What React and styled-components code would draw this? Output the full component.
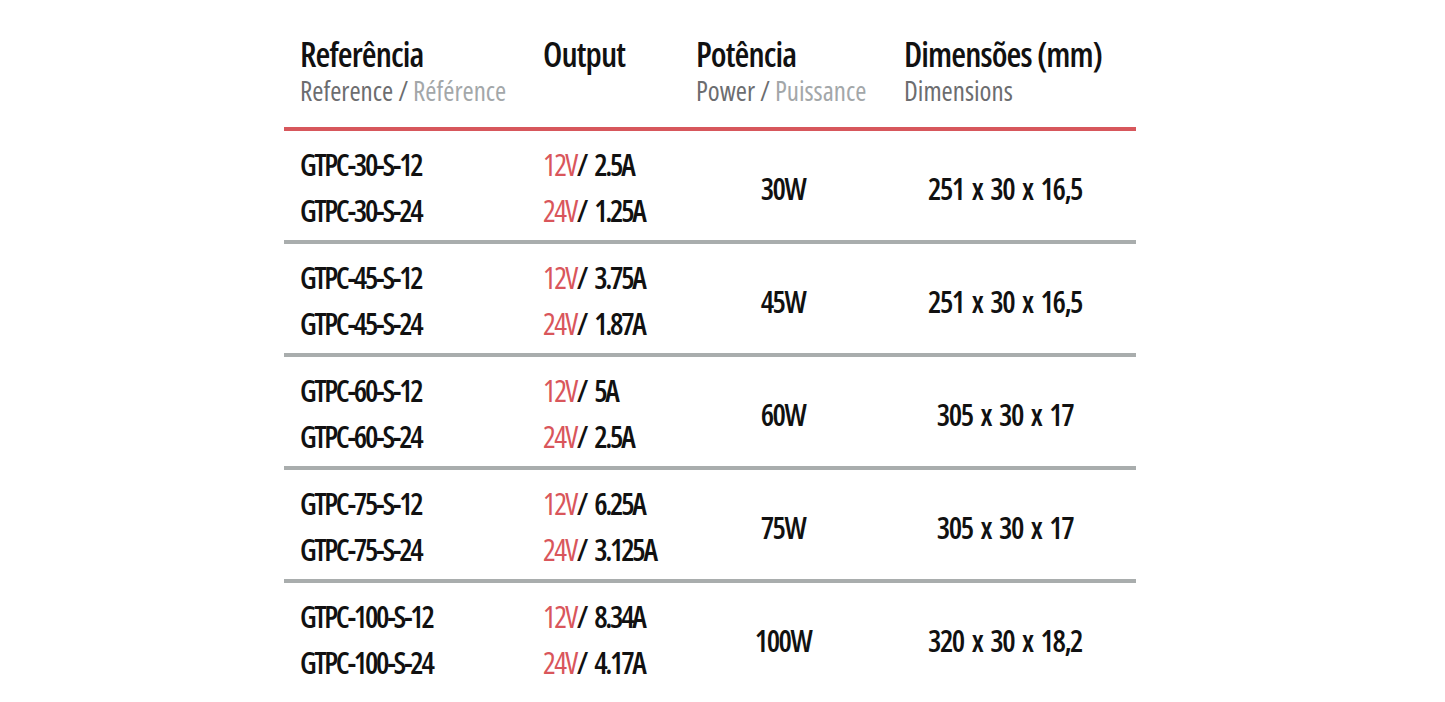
import React from "react";
import styled, { createGlobalStyle } from "styled-components";

const GlobalStyle = createGlobalStyle`
  html, body { margin: 0; padding: 0; background: #fff; }
  body {
    font-family: "Open Sans", "Roboto Condensed", "Liberation Sans", sans-serif;
    font-stretch: 75%;
    color: #111;
  }
`;

const Page = styled.div`
  display: flex;
  padding: 37px 0 0 284px;
`;

const Table = styled.div`
  width: 852px;
  display: flex;
  flex-direction: column;
`;

const Columns = `
  display: grid;
  grid-template-columns: 243px 153px 174px 266px;
  padding-left: 16px;
`;

const HeaderRow = styled.div`
  ${Columns}
  padding-bottom: 23px;
  border-bottom: 4px solid #d7575c;
`;

const HeadCell = styled.div`
  display: flex;
  flex-direction: column;
  gap: 6px;
  padding-left: ${(p) => p.$indent || 0}px;
`;

const Title = styled.div`
  font-size: 34px;
  line-height: 34px;
  font-weight: 600;
  letter-spacing: -0.9px;
  white-space: nowrap;
`;

const Sub = styled.div`
  font-size: 27px;
  line-height: 27px;
  font-weight: 400;
  color: #6c6d6f;
  white-space: nowrap;
`;

const Alt = styled.span`
  color: #a3a7a9;
`;

const Slash = styled.span`
  color: #6c6d6f;
  margin: 0 5px;
`;

const Row = styled.div`
  ${Columns}
  padding-top: 11px;
  padding-bottom: 6px;
  border-bottom: 4px solid ${(p) => (p.$last ? "transparent" : "#a9adad")};
`;

const Lines = styled.div`
  display: flex;
  flex-direction: column;
`;

const Line = styled.div`
  font-size: 30px;
  line-height: 46px;
  font-weight: 600;
  letter-spacing: -2.3px;
  word-spacing: 5px;
  white-space: nowrap;
`;

const Volt = styled.span`
  color: #d9565b;
  font-weight: 400;
  letter-spacing: -1.6px;
`;

const Centered = styled.div`
  display: flex;
  align-items: center;
  justify-content: center;
  font-size: 30px;
  font-weight: 600;
  letter-spacing: -1.5px;
  word-spacing: 4px;
  white-space: nowrap;
  padding-left: ${(p) => p.$shift || 0}px;
`;

const data = [
  { n: 30, a: ["2.5A", "1.25A"], dim: "251 x 30 x 16,5" },
  { n: 45, a: ["3.75A", "1.87A"], dim: "251 x 30 x 16,5" },
  { n: 60, a: ["5A", "2.5A"], dim: "305 x 30 x 17" },
  { n: 75, a: ["6.25A", "3.125A"], dim: "305 x 30 x 17" },
  { n: 100, a: ["8.34A", "4.17A"], dim: "320 x 30 x 18,2" },
];

export default function App() {
  return (
    <>
      <GlobalStyle />
      <Page>
        <Table>
          <HeaderRow>
            <HeadCell>
              <Title>Referência</Title>
              <Sub>
                Reference<Slash>/</Slash>
                <Alt>Référence</Alt>
              </Sub>
            </HeadCell>
            <HeadCell>
              <Title>Output</Title>
            </HeadCell>
            <HeadCell>
              <Title>Potência</Title>
              <Sub>
                Power<Slash>/</Slash>
                <Alt>Puissance</Alt>
              </Sub>
            </HeadCell>
            <HeadCell $indent={34}>
              <Title>Dimensões (mm)</Title>
              <Sub>Dimensions</Sub>
            </HeadCell>
          </HeaderRow>
          {data.map((d, i) => (
            <Row key={d.n} $last={i === data.length - 1}>
              <Lines>
                <Line>GTPC-{d.n}-S-12</Line>
                <Line>GTPC-{d.n}-S-24</Line>
              </Lines>
              <Lines>
                <Line>
                  <Volt>12V</Volt>/ {d.a[0]}
                </Line>
                <Line>
                  <Volt>24V</Volt>/ {d.a[1]}
                </Line>
              </Lines>
              <Centered>{d.n}W</Centered>
              <Centered $shift={4}>{d.dim}</Centered>
            </Row>
          ))}
        </Table>
      </Page>
    </>
  );
}
